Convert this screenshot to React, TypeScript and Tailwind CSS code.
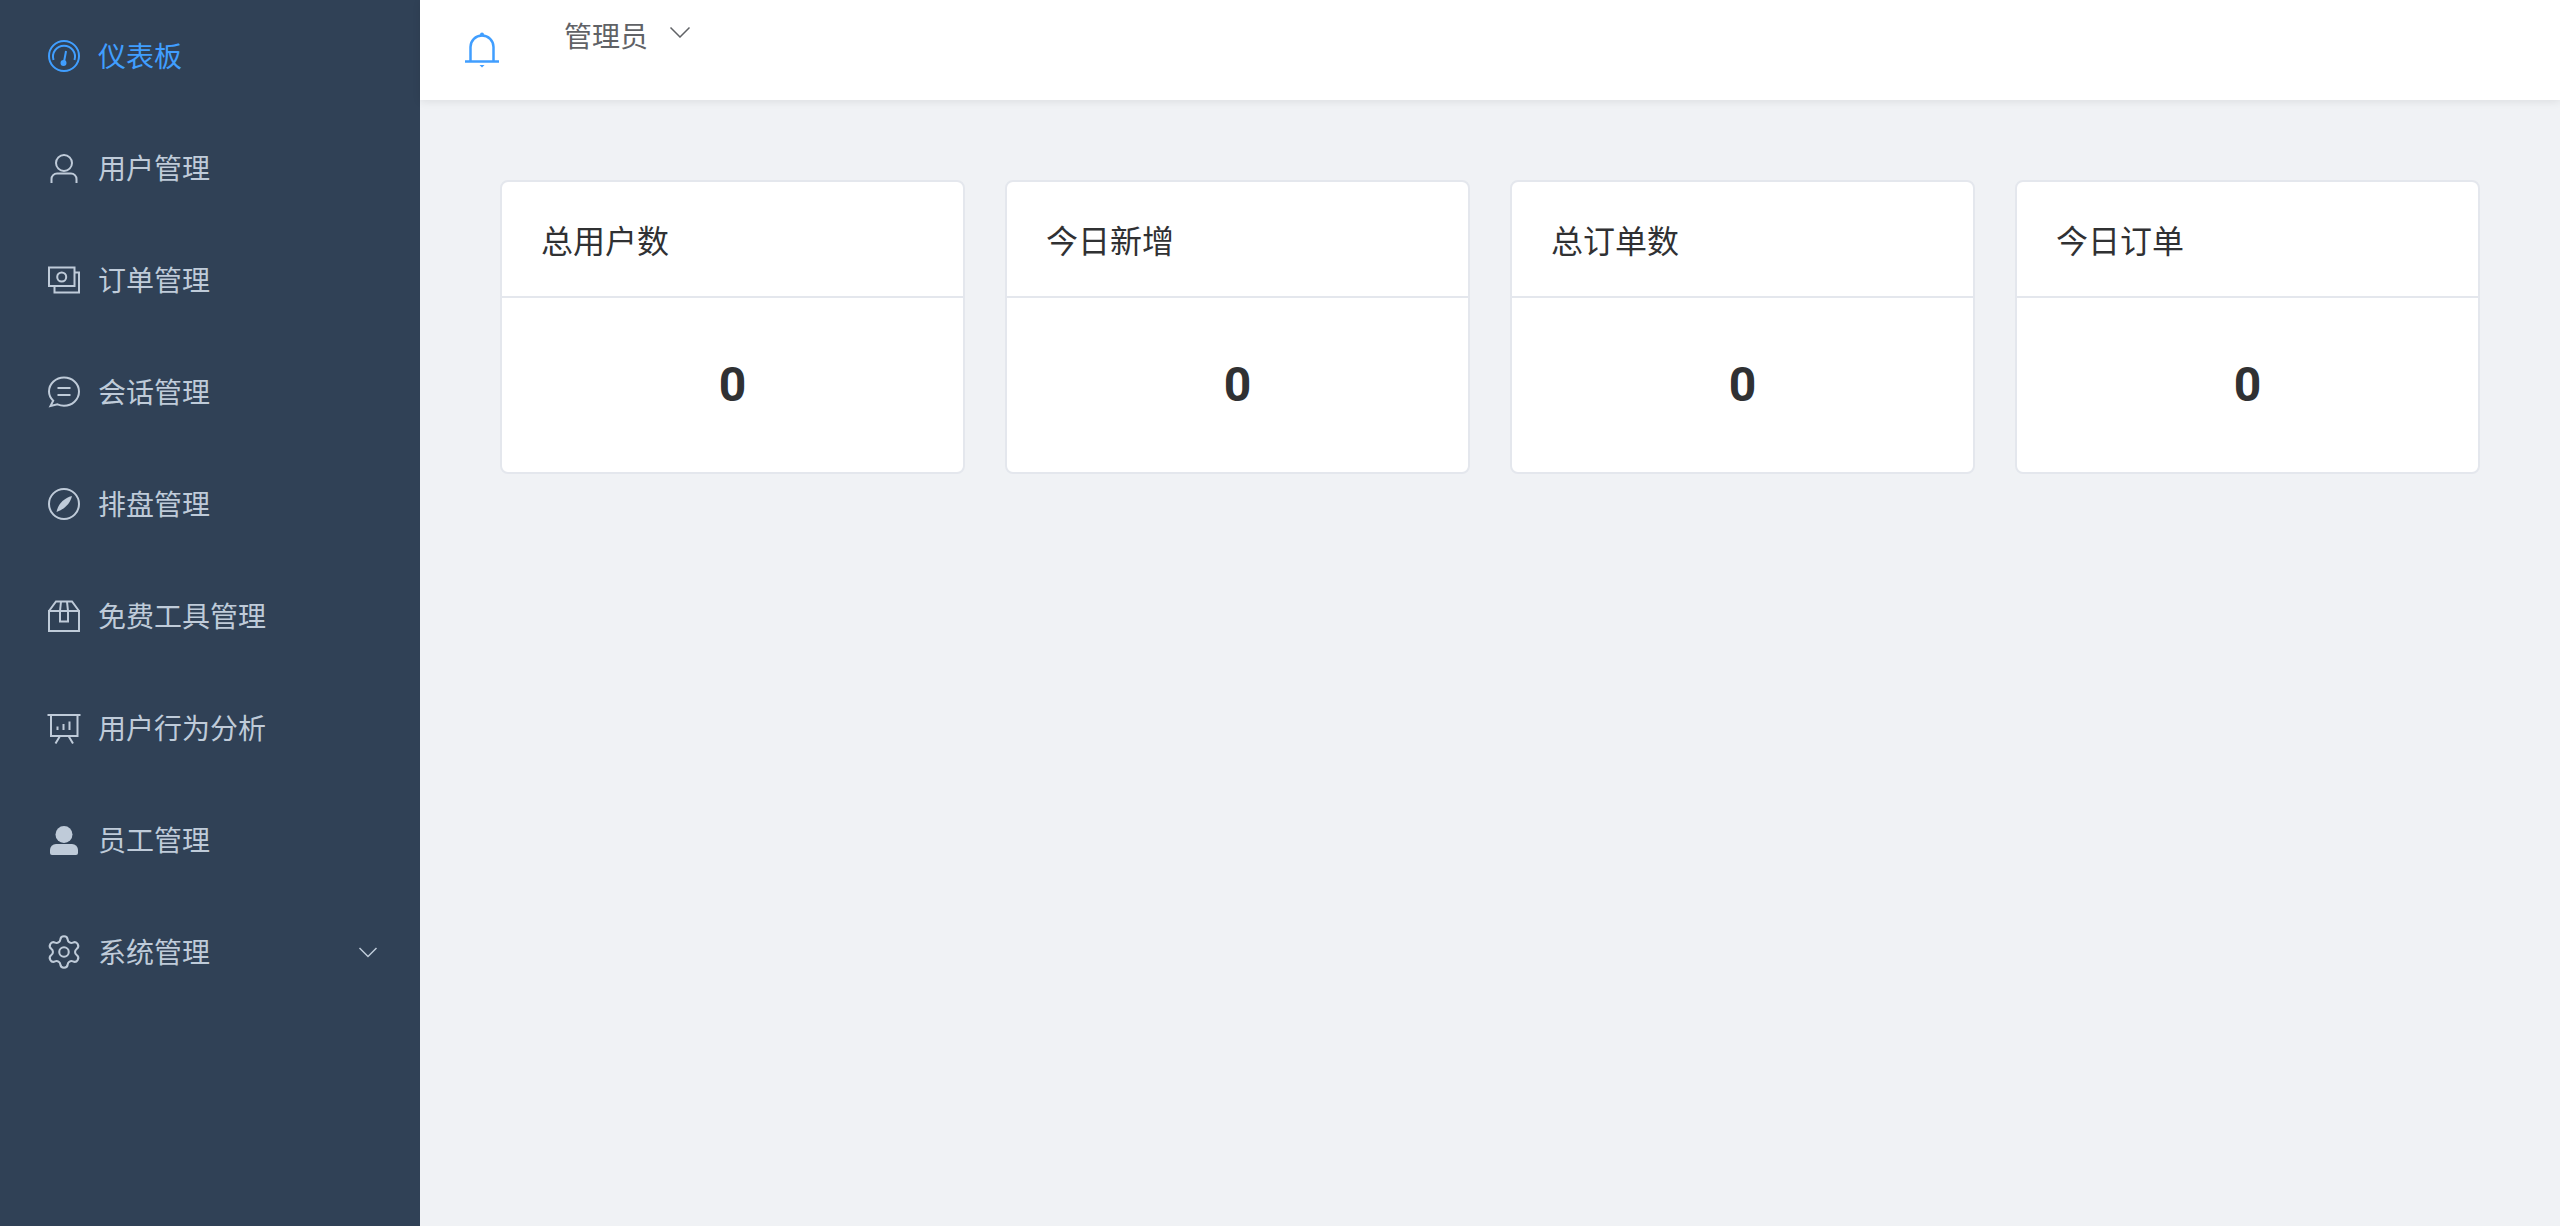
import { Settings } from "lucide-react";
import type { ReactNode } from "react";

const cjk = "font-['Noto_Sans_CJK_SC','Liberation_Sans',sans-serif]";

const Icon = ({ children, stroke = 2 }: { children: ReactNode; stroke?: number }) => (
  <svg width="32" height="32" viewBox="0 0 32 32" fill="none" stroke="currentColor" strokeWidth={stroke} className="shrink-0 overflow-visible">
    {children}
  </svg>
);

const menu: { label: string; icon: ReactNode; active?: boolean; arrow?: boolean }[] = [
  {
    label: "仪表板",
    active: true,
    icon: (
      <Icon>
        <circle cx="16" cy="16" r="15" />
        <path d="M5.5 20a11 11 0 1 1 21 0" />
        <path d="M16 22l2-11" />
        <circle cx="15.5" cy="23" r="2" fill="currentColor" />
      </Icon>
    ),
  },
  {
    label: "用户管理",
    icon: (
      <Icon>
        <circle cx="16" cy="11" r="8" />
        <path d="M3.5 31v-4a5.5 5.5 0 0 1 5.5-5.5h14a5.5 5.5 0 0 1 5.5 5.5v4" />
      </Icon>
    ),
  },
  {
    label: "订单管理",
    icon: (
      <Icon>
        <rect x="1" y="3.5" width="25.5" height="18.5" />
        <circle cx="13.7" cy="13" r="4.5" />
        <path d="M26.5 8.5H31V28.5H6.5V22" />
      </Icon>
    ),
  },
  {
    label: "会话管理",
    icon: (
      <Icon>
        <path d="M16 1.5C8 1.5 1 7.5 1 15.5c0 3.5 1.6 6.7 4.2 9.2L2.5 30l7-1.7c2 .9 4.2 1.4 6.5 1.4 8 0 15-6 15-14.2S24 1.5 16 1.5z" />
        <path d="M9.5 12h13M9.5 19h13" />
      </Icon>
    ),
  },
  {
    label: "排盘管理",
    icon: (
      <Icon>
        <circle cx="16" cy="16" r="15" />
        <path d="M24 8c-1.5 7-7 13-15.5 16C10 16 16 10 24 8z" fill="currentColor" stroke="none" />
      </Icon>
    ),
  },
  {
    label: "免费工具管理",
    icon: (
      <Icon>
        <path d="M1 11h30v20H1zM1 11l7-9.5h16L31 11" />
        <path d="M13 1.5L12 11v10.5h8V11L19 1.5" />
      </Icon>
    ),
  },
  {
    label: "用户行为分析",
    icon: (
      <Icon>
        <path d="M-.5 3h33M3 3v21h26.5V3" />
        <path d="M9.5 18v-3.5M15.5 18v-6M21.5 18V9.5" />
        <path d="M12 24l-4.5 7.5M20.5 24l4.5 7.5" />
      </Icon>
    ),
  },
  {
    label: "员工管理",
    icon: (
      <Icon>
        <circle cx="16" cy="10.5" r="8.5" fill="currentColor" stroke="none" />
        <path d="M2 29v-3a6 6 0 0 1 6-6h16a6 6 0 0 1 6 6v3a2 2 0 0 1-2 2H4a2 2 0 0 1-2-2z" fill="currentColor" stroke="none" />
      </Icon>
    ),
  },
  {
    label: "系统管理",
    arrow: true,
    icon: <Settings size={38} strokeWidth={1.3} className="-m-[3px] shrink-0" />,
  },
];

const stats = ["总用户数", "今日新增", "总订单数", "今日订单"];

const App = () => {
  return (
    <div className={`flex h-[1226px] overflow-hidden bg-[#f0f2f5] ${cjk}`}>
      <aside className="w-[420px] shrink-0 bg-[#304156]">
        {menu.map((item) => (
          <div
            key={item.label}
            className={`flex h-[112px] items-center pl-12 pr-[42px] text-[28px] ${item.active ? "text-[#409eff]" : "text-[#bfcbd9]"}`}
          >
            {item.icon}
            <span className="mb-[3px] ml-[18px]">{item.label}</span>
            {item.arrow && (
              <svg width="20" height="12" viewBox="0 0 20 12" fill="none" stroke="currentColor" strokeWidth="1.5" className="ml-auto">
                <path d="M1.5 2l8.5 8.5L18.5 2" />
              </svg>
            )}
          </div>
        ))}
      </aside>

      <div className="min-w-0 flex-1">
        <header className="flex h-[100px] items-start bg-white pl-11 shadow-[0_2px_8px_rgba(0,0,0,0.08)]">
          <svg width="36" height="36" viewBox="0 0 36 36" fill="none" stroke="#409eff" strokeWidth="2.5" className="mt-8 shrink-0">
            <path d="M6.5 29V15a11.5 11.5 0 0 1 23 0v14" />
            <path d="M1 29.5h34" />
            <circle cx="18" cy="2.5" r="2" fill="#409eff" stroke="none" />
            <path d="M15.5 33h5l-2.5 2.5z" fill="#409eff" stroke="none" />
          </svg>
          <span className="ml-[64px] mt-[14px] text-[28px] leading-[42px] text-[#606266]">管理员</span>
          <svg width="22" height="12" viewBox="0 0 22 12" fill="none" stroke="#606266" strokeWidth="1.5" className="ml-[21px] mt-[26px]">
            <path d="M1.5 1.5l9.5 9.5 9.5-9.5" />
          </svg>
        </header>

        <main className="grid grid-cols-4 gap-10 px-20 pt-20">
          {stats.map((title) => (
            <section key={title} className="overflow-hidden rounded-lg border-2 border-[#e4e7ed] bg-white">
              <div className="h-[116px] border-b-2 border-[#e4e7ed] px-[39px] text-[32px] leading-[114px] text-[#303133]">{title}</div>
              <div className="flex h-[174px] items-center justify-center font-['Roboto',sans-serif] text-[48px] font-bold text-[#303133]">
                0
              </div>
            </section>
          ))}
        </main>
      </div>
    </div>
  );
};

export default App;
